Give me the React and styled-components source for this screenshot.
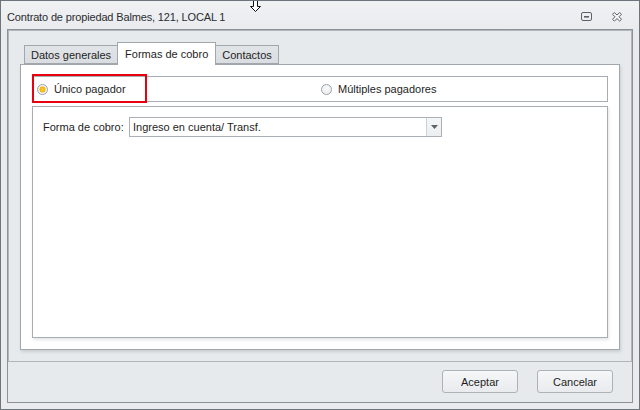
import styled, { createGlobalStyle } from "styled-components";

const GlobalStyle = createGlobalStyle`
  html, body {
    margin: 0;
    padding: 0;
    background: #ffffff;
  }
  *, *::before, *::after {
    box-sizing: border-box;
  }
`;

const TABS = [
  { id: "general", label: "Datos generales" },
  { id: "cobro", label: "Formas de cobro" },
  { id: "contactos", label: "Contactos" },
];

export default function App() {
  return (
    <>
      <GlobalStyle />
      <Window>
        <TitleBar>
          <Title>Contrato de propiedad Balmes, 121, LOCAL 1</Title>
          <TitleButtons>
            <svg width="12" height="9" viewBox="0 0 12 9">
              <rect x="0.5" y="0.5" width="10" height="8" rx="1.5" fill="none" stroke="#5b6168" />
              <rect x="3" y="4" width="5" height="1.6" fill="#5b6168" />
            </svg>
            <svg width="11" height="10" viewBox="0 0 11 10">
              <polygon
                points="0.5,2.3 2.3,0.5 5,3 7.7,0.5 9.5,2.3 7,4.8 9.5,7.3 7.7,9.1 5,6.6 2.3,9.1 0.5,7.3 3,4.8"
                fill="#f4f5f7"
                stroke="#5b6168"
                strokeLinejoin="round"
              />
            </svg>
          </TitleButtons>
        </TitleBar>

        <Client>
          <Panel>
            <TabStrip>
              {TABS.map((t) => (
                <Tab key={t.id} $active={t.id === "cobro"}>
                  {t.label}
                </Tab>
              ))}
            </TabStrip>
            <TabPage>
              <RadioGroup>
                <RadioOption $highlighted>
                  <RadioDot $checked />
                  Único pagador
                </RadioOption>
                <RadioOption>
                  <RadioDot />
                  Múltiples pagadores
                </RadioOption>
              </RadioGroup>
              <FormBox>
                <FieldRow>
                  <Label>Forma de cobro:</Label>
                  <Combo>
                    <ComboText>Ingreso en cuenta/ Transf.</ComboText>
                    <ComboButton>
                      <svg width="7" height="4" viewBox="0 0 7 4">
                        <polygon points="0,0 7,0 3.5,4" fill="#5f646b" />
                      </svg>
                    </ComboButton>
                  </Combo>
                </FieldRow>
              </FormBox>
            </TabPage>
          </Panel>

          <Footer>
            <Button>Aceptar</Button>
            <Button>Cancelar</Button>
          </Footer>
        </Client>

        <Cursor width="12" height="12" viewBox="0 0 12 12">
          <polygon
            points="3.5,-1 7.5,-1 7.5,5.5 10.5,5.5 5.5,10.5 0.5,5.5 3.5,5.5"
            fill="#ffffff"
            stroke="#111111"
          />
        </Cursor>
      </Window>
    </>
  );
}

const Window = styled.div`
  position: relative;
  width: 640px;
  height: 410px;
  display: flex;
  flex-direction: column;
  border: 1px solid #6e747b;
  background: linear-gradient(#f0f1f3, #e9ebee 30px);
  font-family: "Liberation Sans", Arial, sans-serif;
  font-size: 11px;
  color: #1e1e1e;
`;

const TitleBar = styled.div`
  height: 28px;
  display: flex;
  align-items: center;
  justify-content: space-between;
  padding: 3px 16px 0 6px;
`;

const Title = styled.span`
  font-size: 11px;
  letter-spacing: -0.15px;
  color: #2a2d31;
`;

const TitleButtons = styled.div`
  display: flex;
  align-items: center;
  gap: 19px;
`;

const Client = styled.div`
  flex: 1;
  margin: 0 6px 6px 6px;
  display: flex;
  flex-direction: column;
  border: 1px solid #8d9298;
  background: #e7eaed;
`;

const Panel = styled.div`
  height: 332px;
  display: flex;
  flex-direction: column;
  border: 1px solid #b1b6bc;
  padding: 11px;
`;

const TabStrip = styled.div`
  height: 22px;
  display: flex;
  align-items: flex-end;
  padding-left: 4px;
  position: relative;
  z-index: 1;
`;

const Tab = styled.div`
  height: ${(p) => (p.$active ? "23px" : "19px")};
  margin-bottom: ${(p) => (p.$active ? "-1px" : "0")};
  margin-left: -1px;
  display: flex;
  align-items: ${(p) => (p.$active ? "flex-start" : "center")};
  padding: ${(p) => (p.$active ? "5px 7px 0" : "0 6px")};
  border: 1px solid #a2a7ad;
  border-bottom: ${(p) => (p.$active ? "none" : "1px solid #a2a7ad")};
  background: ${(p) => (p.$active ? "#ffffff" : "linear-gradient(#e2e5e8, #d9dce0)")};
  color: #1e1e1e;
  white-space: nowrap;
  &:first-child {
    margin-left: 0;
  }
`;

const TabPage = styled.div`
  flex: 1;
  display: flex;
  flex-direction: column;
  gap: 4px;
  padding: 11px;
  background: #ffffff;
  border: 1px solid #a2a7ad;
  box-shadow: 1px 2px 3px rgba(0, 0, 0, 0.12);
`;

const RadioGroup = styled.div`
  position: relative;
  height: 26px;
  display: grid;
  grid-template-columns: 284px 1fr;
  align-items: center;
  border: 1px solid #a8adb3;
`;

const RadioOption = styled.label`
  position: relative;
  display: flex;
  align-items: center;
  gap: 6px;
  padding-left: 4px;
  height: 24px;
  font-size: 11px;
  color: #1e1e1e;

  ${(p) =>
    p.$highlighted &&
    `
    &::after {
      content: "";
      position: absolute;
      left: -1px;
      top: -3px;
      width: 115px;
      height: 29px;
      border: 2px solid #e8000e;
    }
  `}
`;

const RadioDot = styled.span`
  width: 11px;
  height: 11px;
  border-radius: 50%;
  border: 1px solid #9ba1a7;
  background: ${(p) =>
    p.$checked
      ? "radial-gradient(circle at 50% 50%, #ffd24a 0, #f3b200 2.8px, #f7f8f9 3.4px, #e4e6e9 100%)"
      : "radial-gradient(circle at 50% 40%, #fafbfc 0, #e2e4e7 100%)"};
  box-shadow: inset 0 0 0 1px #f4f5f6;
`;

const FormBox = styled.div`
  flex: 1;
  padding: 10px;
  border: 1px solid #a8adb3;
  box-shadow: 1px 2px 3px rgba(0, 0, 0, 0.1);
`;

const FieldRow = styled.div`
  display: flex;
  align-items: center;
`;

const Label = styled.span`
  width: 86px;
  flex-shrink: 0;
  white-space: nowrap;
  font-size: 11px;
  color: #1e1e1e;
`;

const Combo = styled.div`
  width: 313px;
  height: 20px;
  display: flex;
  border: 1px solid #abb0b6;
  background: #ffffff;
`;

const ComboText = styled.span`
  flex: 1;
  display: flex;
  align-items: center;
  padding-left: 3px;
  font-size: 11px;
  color: #1e1e1e;
`;

const ComboButton = styled.span`
  width: 15px;
  display: flex;
  align-items: center;
  justify-content: center;
  border-left: 1px solid #cdd0d4;
  background: linear-gradient(#f5f6f7, #eceef0);
`;

const Footer = styled.div`
  flex: 1;
  display: flex;
  justify-content: flex-end;
  align-items: flex-start;
  gap: 19px;
  padding: 8px 19px 0 0;
`;

const Button = styled.button`
  width: 76px;
  height: 23px;
  border: 1px solid #adb2b8;
  border-radius: 3px;
  background: linear-gradient(#f5f6f8, #e9ebee);
  font-family: "Liberation Sans", Arial, sans-serif;
  font-size: 11px;
  color: #1e1e1e;
  padding: 0;
`;

const Cursor = styled.svg`
  position: absolute;
  left: 249px;
  top: 0;
`;
